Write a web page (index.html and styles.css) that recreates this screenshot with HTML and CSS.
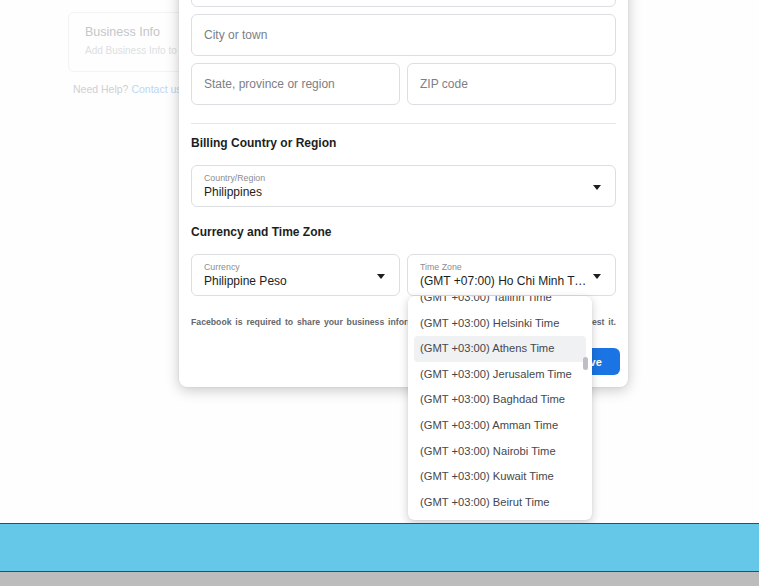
FILE: index.html
```html
<!DOCTYPE html>
<html>
<head>
<meta charset="utf-8">
<link rel="stylesheet" href="styles.css">
</head>
<body>
<div class="page">
  <div class="main">
    <div class="side">
      <div class="side-card">
        <div class="side-title">Business Info</div>
        <div class="side-sub">Add Business Info to help us</div>
      </div>
      <div class="side-help">Need Help? <span class="side-link">Contact us</span></div>
    </div>

    <div class="modal">
      <div class="field field-top"><span class="ph">Street address</span></div>
      <div class="field field-gap"><span class="ph">City or town</span></div>
      <div class="row field-gap">
        <div class="field"><span class="ph">State, province or region</span></div>
        <div class="field"><span class="ph">ZIP code</span></div>
      </div>
      <div class="divider"></div>
      <div class="heading h-first">Billing Country or Region</div>
      <div class="select sel-gap">
        <div class="sel-text">
          <div class="sel-label">Country/Region</div>
          <div class="sel-value">Philippines</div>
        </div>
        <span class="caret"></span>
      </div>
      <div class="heading h-second">Currency and Time Zone</div>
      <div class="row sel-gap">
        <div class="select">
          <div class="sel-text">
            <div class="sel-label">Currency</div>
            <div class="sel-value">Philippine Peso</div>
          </div>
          <span class="caret"></span>
        </div>
        <div class="select">
          <div class="sel-text">
            <div class="sel-label">Time Zone</div>
            <div class="sel-value">(GMT +07:00) Ho Chi Minh Time</div>
          </div>
          <span class="caret"></span>
        </div>
      </div>
      <p class="note">Facebook is required to share your business information with tax authorities when they request it.</p>
      <div class="actions">
        <button class="btn btn-cancel">Cancel</button>
        <button class="btn btn-save">Save</button>
      </div>
    </div>

    <div class="dropdown">
      <ul class="dd-list">
        <li class="dd-item">(GMT +03:00) Tallinn Time</li>
        <li class="dd-item">(GMT +03:00) Helsinki Time</li>
        <li class="dd-item dd-active">(GMT +03:00) Athens Time</li>
        <li class="dd-item">(GMT +03:00) Jerusalem Time</li>
        <li class="dd-item">(GMT +03:00) Baghdad Time</li>
        <li class="dd-item">(GMT +03:00) Amman Time</li>
        <li class="dd-item">(GMT +03:00) Nairobi Time</li>
        <li class="dd-item">(GMT +03:00) Kuwait Time</li>
        <li class="dd-item">(GMT +03:00) Beirut Time</li>
        <li class="dd-item">(GMT +03:00) Riyadh Time</li>
      </ul>
      <span class="dd-thumb"></span>
    </div>
  </div>
  <div class="bar"></div>
  <div class="footer"></div>
</div>
</body>
</html>
```

FILE: styles.css
```css
* { box-sizing: border-box; }
html, body { margin: 0; padding: 0; }
body {
  font-family: "Liberation Sans", Arial, sans-serif;
  background: #fdfdfd;
  width: 759px;
  height: 586px;
  overflow: hidden;
}
.page { display: flex; flex-direction: column; height: 586px; }
.main {
  position: relative;
  height: 523px;
  background: #fefefe;
  overflow: hidden;
}
.side { padding: 12px 0 0 68px; width: 240px; }
.side-card {
  border: 1px solid #f3f3f4;
  border-radius: 6px;
  height: 60px;
  padding: 11px 16px;
}
.side-title { font-size: 12.5px; color: #c4c7cb; line-height: 16px; }
.side-sub { font-size: 10px; color: #dcdee1; margin-top: 5px; white-space: nowrap; }
.side-help { font-size: 10.5px; color: #cfd0d2; margin: 11px 0 0 5px; white-space: nowrap; }
.side-link { color: #bcd6f3; }

.modal {
  position: absolute;
  left: 179px;
  top: -40px;
  width: 449px;
  background: #fff;
  border-radius: 0 0 8px 8px;
  box-shadow: 0 3px 14px rgba(0,0,0,0.22), 0 0 2px rgba(0,0,0,0.1);
  padding: 0 12px 12px;
}
.field {
  height: 42px;
  border: 1px solid #dcdee2;
  border-radius: 6px;
  display: flex;
  align-items: center;
  padding: 0 12px;
  flex: 1;
}
.field-top { margin-top: 5px; }
.field-gap { margin-top: 7px; }
.ph { font-size: 12px; color: #7d8085; }
.row { display: flex; gap: 7px; }
.divider { height: 1px; background: #e4e6e9; margin-top: 18px; }
.heading { font-size: 12px; font-weight: bold; color: #1c1e21; line-height: 18px; }
.h-first { margin-top: 10px; }
.h-second { margin-top: 16px; }
.sel-gap { margin-top: 13px; }
.select {
  flex: 1;
  height: 42px;
  border: 1px solid #dcdee2;
  border-radius: 6px;
  padding: 7px 14px 0 12px;
  display: flex;
  align-items: flex-start;
  min-width: 0;
}
.sel-text { flex: 1; min-width: 0; }
.sel-label { font-size: 8.8px; color: #8a8d91; line-height: 10px; }
.sel-value {
  font-size: 12px; color: #1c1e21; line-height: 16px; margin-top: 1px;
  white-space: nowrap; overflow: hidden; text-overflow: ellipsis;
  padding-right: 5px;
}
.caret {
  width: 0; height: 0;
  border-left: 4.5px solid transparent;
  border-right: 4.5px solid transparent;
  border-top: 5px solid #1c1e21;
  margin-top: 12px;
  flex: none;
}
.note {
  margin: 20px 0 0;
  font-size: 8.7px;
  font-weight: bold;
  color: #65676b;
  line-height: 12px;
  white-space: nowrap;
  overflow: hidden;
  text-align: justify;
  text-align-last: justify;
}
.actions {
  display: flex;
  justify-content: flex-end;
  gap: 8px;
  margin: 20px -4px 0 0;
}
.btn {
  height: 27px;
  border: none;
  border-radius: 6px;
  font-family: inherit;
  font-size: 11px;
  font-weight: bold;
  padding: 0 16px;
}
.btn-cancel { background: #e4e6eb; color: #050505; }
.btn-save { background: #1b74e4; color: #fff; width: 62px; }

.dropdown {
  position: absolute;
  left: 408px;
  top: 296px;
  width: 184px;
  height: 224px;
  background: #fff;
  border-radius: 6px;
  box-shadow: 0 3px 10px rgba(0,0,0,0.2), 0 0 1px rgba(0,0,0,0.15);
  overflow: hidden;
}
.dd-list {
  list-style: none;
  margin: -11px 0 0;
  padding: 0 6px;
}
.dd-item {
  height: 25.6px;
  line-height: 25.6px;
  font-size: 11.2px;
  color: #45484c;
  padding-left: 6px;
  border-radius: 4px;
  white-space: nowrap;
}
.dd-active { background: #f0f1f2; }
.dd-thumb {
  position: absolute;
  left: 175px;
  top: 61px;
  width: 5px;
  height: 13px;
  border-radius: 3px;
  background: #bcc0c4;
}

.bar {
  height: 49px;
  background: #66c8e9;
  border-top: 1px solid #2f4f5c;
  border-bottom: 1px solid #2f4f5c;
}
.footer { flex: 1; background: #bcbcbc; }
```
